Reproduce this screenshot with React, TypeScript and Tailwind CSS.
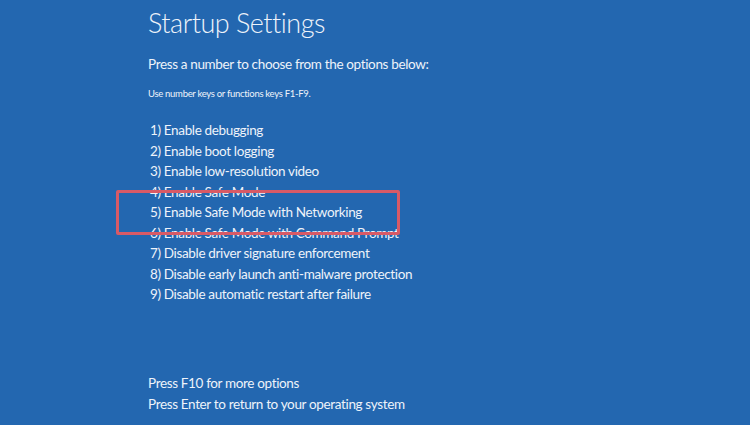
import React from "react";

const items = [
  "1) Enable debugging",
  "2) Enable boot logging",
  "3) Enable low-resolution video",
  "4) Enable Safe Mode",
  "5) Enable Safe Mode with Networking",
  "6) Enable Safe Mode with Command Prompt",
  "7) Disable driver signature enforcement",
  "8) Disable early launch anti-malware protection",
  "9) Disable automatic restart after failure",
];

export default function App() {
  return (
    <div
      className="relative w-[750px] h-[425px] overflow-hidden bg-[#2367b0] text-[#eef3fa]"
      style={{ fontFamily: 'Lato, "Open Sans", sans-serif' }}
    >
      <div className="flex flex-col pl-[148px] pt-[6px]">
        <h1 className="text-[27px] font-light leading-[34px] tracking-[-0.5px]">Startup Settings</h1>
        <p className="mt-[15px] text-[13.5px] leading-[18px] tracking-[-0.35px]">
          Press a number to choose from the options below:
        </p>
        <p className="mt-[15px] text-[9.5px] leading-[12px] tracking-[-0.3px]">
          Use number keys or functions keys F1-F9.
        </p>
        <ul className="mt-[20px] flex flex-col text-[13.5px] leading-[20.5px] tracking-[-0.35px] pl-[2px]">
          {items.map((t) => (
            <li key={t}>{t}</li>
          ))}
        </ul>
        <div className="mt-[68px] flex flex-col text-[13.5px] leading-[21px] tracking-[-0.35px]">
          <p>Press F10 for more options</p>
          <p>Press Enter to return to your operating system</p>
        </div>
      </div>
      <div className="absolute left-[116px] top-[190px] w-[284px] h-[45px] border-[3px] border-[#d85a66] rounded-[2px]" />
    </div>
  );
}
